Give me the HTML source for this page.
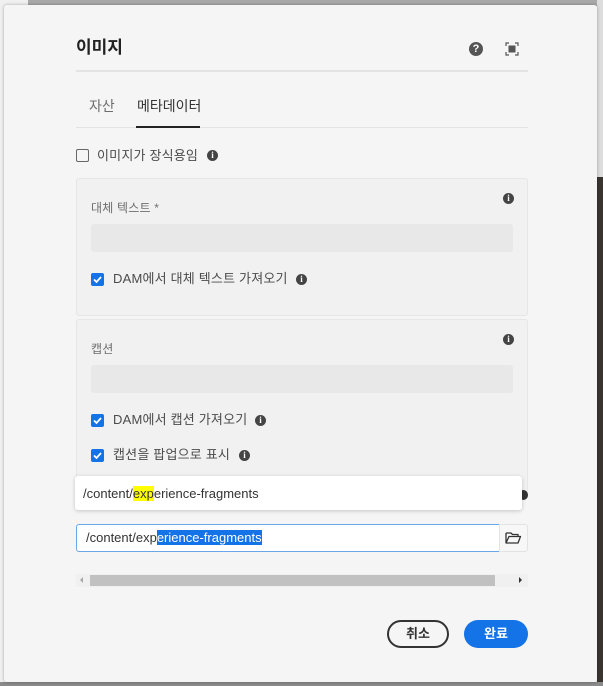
<!DOCTYPE html>
<html><head><meta charset="utf-8"><style>
*{box-sizing:border-box;margin:0;padding:0}
body{width:603px;height:686px;overflow:hidden;position:relative;background:#f0f0f0;font-family:"Liberation Sans","Noto Sans CJK KR",sans-serif;color:#4b4b4b}
.abs{position:absolute}
.dlg{left:4px;top:5px;width:593px;height:677px;background:#f5f5f5;border-radius:3px;box-shadow:0 0 3px rgba(0,0,0,.3)}
.t{position:absolute;font-size:13px;line-height:16px;white-space:nowrap}
.k{letter-spacing:0.2px}
.cb{position:absolute;width:13px;height:13px;border-radius:2px;background:#1473e6}
.cb svg{position:absolute;left:1px;top:1px}
.info{position:absolute;width:11px;height:11px;border-radius:50%;background:#444;color:#fff;font:bold 9px/11px "Liberation Serif",serif;text-align:center}
.panel{position:absolute;left:76px;width:452px;background:#f1f1f1;border:1px solid #e6e6e6;border-radius:3px}
.inp{position:absolute;left:91px;width:422px;height:28px;background:#e8e8e8;border-radius:3px}
</style></head><body>
<div class="abs" style="left:28px;top:0;width:575px;height:6px;background:#a8a8a8"></div>
<div class="abs" style="left:0;top:682px;width:603px;height:4px;background:#8a8a8a"></div>
<div class="abs" style="left:597px;top:0;width:6px;height:177px;background:#ddd"></div>
<div class="abs" style="left:597px;top:177px;width:6px;height:505px;background:#3a3530"></div>
<div class="abs dlg"></div>
<div class="t" style="left:76px;top:38px;font-size:17px;line-height:20px;font-weight:bold;color:#222">이미지</div>
<div class="abs" style="left:469px;top:42px;width:14px;height:14px;border-radius:50%;background:#555;color:#fff;font:bold 11px/14px 'Liberation Sans';text-align:center">?</div>
<svg class="abs" style="left:505px;top:42px" width="14" height="14"><path d="M1 4V1h3M10 1h3v3M13 10v3h-3M4 13H1v-3" stroke="#555" stroke-width="1.2" fill="none"/><rect x="3.5" y="3.5" width="7" height="7" fill="#555"/></svg>
<div class="abs" style="left:76px;top:70px;width:452px;height:2px;background:#e3e3e3"></div>
<div class="t" style="left:89px;top:98px;font-size:14px;color:#6e6e6e">자산</div>
<div class="t" style="left:137px;top:98px;font-size:14px;color:#333">메타데이터</div>
<div class="abs" style="left:76px;top:127px;width:452px;height:1px;background:#e3e3e3"></div>
<div class="abs" style="left:136px;top:126px;width:64px;height:2px;background:#222"></div>
<div class="abs" style="left:76px;top:149px;width:13px;height:13px;border:1.5px solid #666;border-radius:2px"></div>
<div class="t k" style="left:97px;top:148px;color:#4b4b4b">이미지가 장식용임</div>
<div class="info" style="left:207px;top:150px">i</div>

<div class="panel" style="top:178px;height:138px"></div>
<div class="t k" style="left:91px;top:200px;font-size:12px;color:#6e6e6e">대체 텍스트 *</div>
<div class="info" style="left:503px;top:193px">i</div>
<div class="inp" style="top:224px"></div>
<div class="cb" style="left:91px;top:273px"><svg width="11" height="11"><path d="M2 5.5l2.5 2.5L9 3" stroke="#fff" stroke-width="1.8" fill="none"/></svg></div>
<div class="t k" style="left:113px;top:271px">DAM에서 대체 텍스트 가져오기</div>
<div class="info" style="left:296px;top:274px">i</div>

<div class="panel" style="top:319px;height:180px"></div>
<div class="t k" style="left:91px;top:341px;font-size:12px;color:#6e6e6e">캡션</div>
<div class="info" style="left:503px;top:334px">i</div>
<div class="inp" style="top:365px"></div>
<div class="cb" style="left:91px;top:414px"><svg width="11" height="11"><path d="M2 5.5l2.5 2.5L9 3" stroke="#fff" stroke-width="1.8" fill="none"/></svg></div>
<div class="t k" style="left:113px;top:412px">DAM에서 캡션 가져오기</div>
<div class="info" style="left:255px;top:415px">i</div>
<div class="cb" style="left:91px;top:449px"><svg width="11" height="11"><path d="M2 5.5l2.5 2.5L9 3" stroke="#fff" stroke-width="1.8" fill="none"/></svg></div>
<div class="t k" style="left:113px;top:447px">캡션을 팝업으로 표시</div>
<div class="info" style="left:239px;top:450px">i</div>

<div class="abs" style="left:519px;top:490px;width:9px;height:10px;border-radius:50%;background:#333"></div>
<div class="abs" style="left:75px;top:476px;width:447px;height:34px;background:#fff;border-radius:3px;box-shadow:0 1px 4px rgba(0,0,0,.2)"></div>
<div class="t" style="left:83px;top:486px;color:#333">/content/<span style="background:#ffff00">exp</span>erience-fragments</div>

<div class="abs" style="left:76px;top:524px;width:424px;height:28px;background:#fff;border:1px solid #6aa6ea;border-radius:3px 0 0 3px"></div>
<div class="t" style="left:86px;top:530px;color:#333">/content/exp<span style="background:#1473e6;color:#fff">erience-fragments</span></div>
<div class="abs" style="left:499px;top:524px;width:29px;height:28px;background:#f7f7f7;border:1px solid #e3e3e3;border-radius:0 3px 3px 0"></div>
<svg class="abs" style="left:505px;top:531px" width="17" height="13"><path d="M1 2h5l1.5 1.5H13v2M1 2v10h12l2.5-6.5H4L1 12" stroke="#333" stroke-width="1.3" fill="none" stroke-linejoin="round"/></svg>

<div class="abs" style="left:76px;top:574px;width:452px;height:13px;background:#f0f0f0"></div>
<div class="abs" style="left:90px;top:575px;width:405px;height:11px;background:#c1c1c1"></div>
<div class="abs" style="left:80px;top:577px;width:0;height:0;border:3px solid transparent;border-right-color:#aaa;border-left:0"></div>
<div class="abs" style="left:519px;top:577px;width:0;height:0;border:3px solid transparent;border-left-color:#333;border-right:0"></div>

<div class="abs" style="left:387px;top:620px;width:62px;height:28px;border:2px solid #333;border-radius:14px;text-align:center;font-size:13px;line-height:24px;font-weight:bold;color:#333">취소</div>
<div class="abs" style="left:464px;top:620px;width:64px;height:28px;background:#1473e6;border-radius:14px;text-align:center;font-size:13px;line-height:28px;font-weight:bold;color:#fff">완료</div>
</body></html>
